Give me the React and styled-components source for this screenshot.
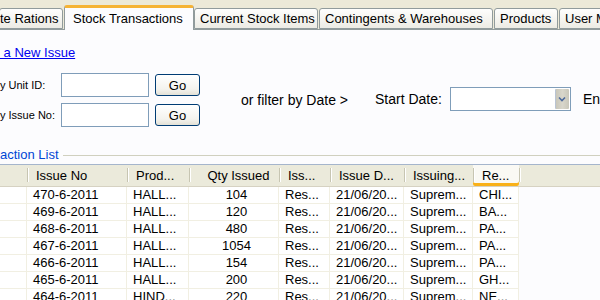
import React from "react";
import styled, { createGlobalStyle } from "styled-components";

const GlobalStyle = createGlobalStyle`
  html, body {
    margin: 0;
    padding: 0;
    background: #fcfcfe;
    font-family: "Liberation Sans", Arial, sans-serif;
    font-size: 13px;
    color: #000;
    overflow: hidden;
  }
`;

const Page = styled.div`
  width: 600px;
  height: 300px;
  overflow: hidden;
`;

const TabStrip = styled.div`
  display: flex;
  align-items: flex-end;
  height: 30px;
  background: #ece9d8;
  border-bottom: 1px solid #919b9c;
  box-sizing: border-box;
`;

const Tab = styled.div`
  flex: none;
  box-sizing: border-box;
  width: ${(p) => p.$w}px;
  height: ${(p) => (p.$active ? 25 : 21)}px;
  margin: ${(p) => (p.$active ? "0 0 -1px 0" : "0 1px 0 0")};
  padding: ${(p) => (p.$active ? "3px 0 0 8px" : "2px 0 0 5px")};
  white-space: nowrap;
  overflow: hidden;
  border: 1px solid #919b9c;
  border-bottom: ${(p) => (p.$active ? "none" : "1px solid #919b9c")};
  border-top: ${(p) => (p.$active ? "3px solid #f5b335" : "1px solid #919b9c")};
  border-radius: 3px 3px 0 0;
  background: ${(p) =>
    p.$active ? "#fcfcfe" : "linear-gradient(#fefefd, #f4f3ee 60%, #ecebe4)"};
  line-height: 16px;
  &:first-child {
    margin-left: -1px;
    padding-left: 0;
  }
`;

const Content = styled.div`
  display: flex;
  flex-direction: column;
`;

const NewLink = styled.a`
  display: block;
  margin-top: 15px;
  line-height: 16px;
  color: #0000ee;
  text-decoration: underline;
  white-space: pre;
  width: fit-content;
`;

const FilterArea = styled.div`
  display: flex;
  align-items: center;
  margin-top: 12px;
  font-size: 14px;
`;

const SearchGrid = styled.div`
  display: grid;
  grid-template-columns: 61px 94px auto;
  row-gap: 6px;
  align-items: center;
`;

const Label = styled.span`
  white-space: nowrap;
  font-size: 11px;
  line-height: 14px;
`;

const TextBox = styled.input`
  box-sizing: border-box;
  width: ${(p) => p.$w || 88}px;
  height: 24px;
  border: 1px solid #7f9db9;
  background: #fff;
  margin: 0;
  padding: 2px;
  font: inherit;
`;

const GoButton = styled.button`
  box-sizing: border-box;
  width: 45px;
  height: 22px;
  margin: 0;
  padding: 0;
  border: 1px solid #003c74;
  border-radius: 3px;
  background: linear-gradient(#ffffff, #f4f3ee 70%, #e3e1d6);
  font-family: "Liberation Sans", Arial, sans-serif;
  font-size: 13px;
  color: #000;
`;

const OrText = styled.span`
  margin-left: 41px;
  white-space: nowrap;
`;

const DateLabel = styled.span`
  margin-left: 27px;
  margin-right: 8px;
  white-space: nowrap;
  margin-top: -2px;
`;

const Combo = styled.div`
  display: flex;
  box-sizing: border-box;
  width: 121px;
  height: 24px;
  margin-top: -3px;
  border: 1px solid #7f9db9;
  background: #fff;
  flex: none;
`;

const ComboField = styled.div`
  flex: 1;
`;

const ComboButton = styled.div`
  width: 13px;
  margin: 1px 1px 1px 0;
  background: linear-gradient(90deg, #c9c7ba, #d8d6cb 50%, #c9c7ba);
  border-left: 1px solid #b9c4d4;
  display: flex;
  align-items: center;
  justify-content: center;
  border-radius: 1px;
`;

const EndLabel = styled.span`
  margin-left: 12px;
  margin-top: -2px;
  white-space: nowrap;
`;

const GroupTitle = styled.div`
  display: flex;
  align-items: center;
  gap: 4px;
  margin-top: 20px;
  line-height: 16px;
  color: #0046d5;
  white-space: nowrap;
  &::after {
    content: "";
    flex: 1;
    height: 1px;
    background: #d0d0bf;
  }
`;

const cols = "27px 100px 62px 90px 51px 74px 69px 46px 1fr";

const Grid = styled.div`
  margin-top: 1px;
  border-top: 1px solid #a5b5cc;
`;

const HeaderRow = styled.div`
  display: grid;
  grid-template-columns: ${cols};
  height: 22px;
  box-sizing: border-box;
  background: #ebeadb;
  border-bottom: 1px solid #d6d2c2;
`;

const HeaderCell = styled.div`
  position: relative;
  padding-left: 9px;
  line-height: 21px;
  white-space: nowrap;
  text-align: ${(p) => (p.$center ? "center" : "left")};
  background: ${(p) => (p.$hover ? "#faf9f4" : "transparent")};
  box-shadow: ${(p) => (p.$hover ? "inset 0 -3px 0 #f9b119" : "none")};
  border-radius: ${(p) => (p.$hover ? "0 0 2px 2px" : "0")};
  &::before {
    content: "";
    display: ${(p) => (p.$first ? "none" : "block")};
    position: absolute;
    left: 0;
    top: 3px;
    bottom: 4px;
    width: 1px;
    background: #c7c5b2;
    box-shadow: 1px 0 0 #fff;
  }
`;

const HeaderFill = styled.div`
  position: relative;
  &::before {
    content: "";
    position: absolute;
    left: 0;
    top: 3px;
    bottom: 4px;
    width: 1px;
    background: #c7c5b2;
    box-shadow: 1px 0 0 #fff;
  }
`;

const Row = styled.div`
  display: grid;
  grid-template-columns: ${cols};
  height: 17px;
`;

const Cell = styled.div`
  box-sizing: border-box;
  padding: 0 0 0 6px;
  background: #fff;
  border-right: 1px solid #f1efe2;
  border-bottom: 1px solid #f1efe2;
  line-height: 16px;
  white-space: nowrap;
  overflow: hidden;
  text-align: ${(p) => (p.$center ? "center" : "left")};
`;

const headers = [
  { t: "" },
  { t: "Issue No" },
  { t: "Prod..." },
  { t: "Qty Issued", center: true },
  { t: "Iss..." },
  { t: "Issue D..." },
  { t: "Issuing..." },
  { t: "Re...", hover: true },
];

const rows = [
  ["470-6-2011", "HALL...", "104", "CHI..."],
  ["469-6-2011", "HALL...", "120", "BA..."],
  ["468-6-2011", "HALL...", "480", "PA..."],
  ["467-6-2011", "HALL...", "1054", "PA..."],
  ["466-6-2011", "HALL...", "154", "PA..."],
  ["465-6-2011", "HALL...", "200", "GH..."],
  ["464-6-2011", "HIND...", "220", "NE..."],
];

const tabs = [
  { t: "te Rations", w: 64 },
  { t: "Stock Transactions", w: 130, active: true },
  { t: "Current Stock Items", w: 124 },
  { t: "Contingents & Warehouses", w: 174 },
  { t: "Products", w: 64 },
  { t: "User Management", w: 120 },
];

export default function App() {
  return (
    <Page>
      <GlobalStyle />
      <TabStrip>
        {tabs.map((tab) => (
          <Tab key={tab.t} $w={tab.w} $active={tab.active}>
            {tab.t}
          </Tab>
        ))}
      </TabStrip>
      <Content>
        <NewLink href="#">{" a New Issue"}</NewLink>
        <FilterArea>
          <SearchGrid>
            <Label>y Unit ID:</Label>
            <TextBox />
            <GoButton>Go</GoButton>
            <Label>y Issue No:</Label>
            <TextBox />
            <GoButton>Go</GoButton>
          </SearchGrid>
          <OrText>or filter by Date &gt;</OrText>
          <DateLabel>Start Date:</DateLabel>
          <Combo>
            <ComboField />
            <ComboButton>
              <svg width="8" height="6" viewBox="0 0 8 6">
                <path d="M1 1.5 L4 4.5 L7 1.5" fill="none" stroke="#4d6a9c" strokeWidth="1.6" />
              </svg>
            </ComboButton>
          </Combo>
          <EndLabel>End Date:</EndLabel>
        </FilterArea>
        <GroupTitle>action List</GroupTitle>
        <Grid>
          <HeaderRow>
            {headers.map((h, i) => (
              <HeaderCell key={i} $first={i === 0} $center={h.center} $hover={h.hover}>
                {h.t}
              </HeaderCell>
            ))}
            <HeaderFill />
          </HeaderRow>
          {rows.map((r) => (
            <Row key={r[0]}>
              <Cell />
              <Cell>{r[0]}</Cell>
              <Cell>{r[1]}</Cell>
              <Cell $center>{r[2]}</Cell>
              <Cell>Res...</Cell>
              <Cell>21/06/20...</Cell>
              <Cell>Suprem...</Cell>
              <Cell>{r[3]}</Cell>
            </Row>
          ))}
        </Grid>
      </Content>
    </Page>
  );
}
